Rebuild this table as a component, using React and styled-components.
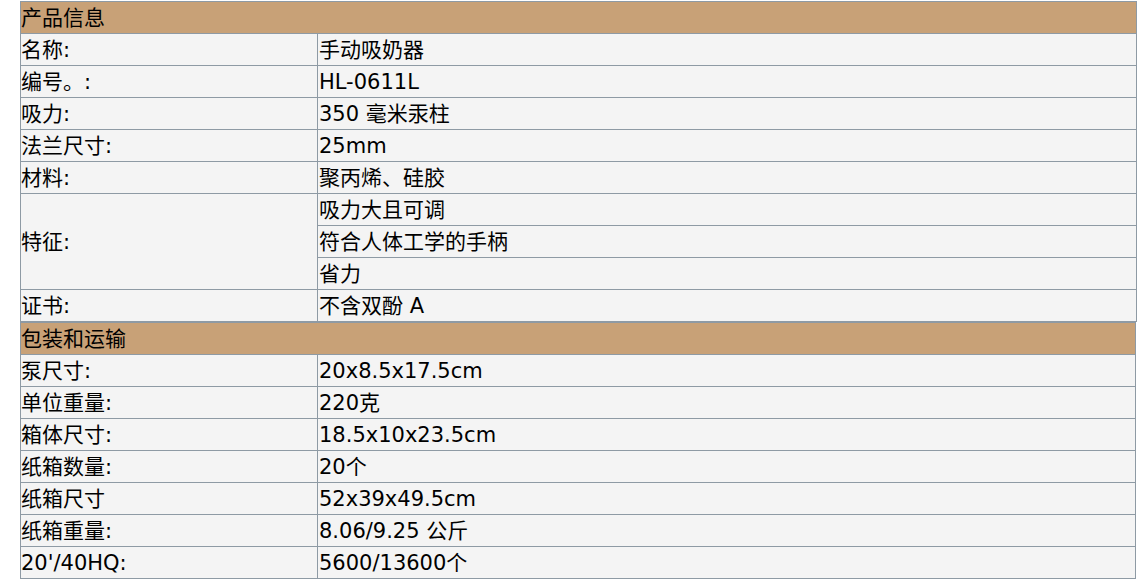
import React from 'react'
import styled, {createGlobalStyle} from 'styled-components'

const GlobalStyle = createGlobalStyle`
  html, body {
    margin: 0;
    padding: 0;
    background: #ffffff;
  }
  body {
    font-family: "DejaVu Sans", Verdana, "Noto Sans CJK SC", sans-serif;
    color: #000;
  }
`

const Page = styled.div`
  display: flex;
  flex-direction: column;
  padding: 1px 0 0 20px;
`

const Table = styled.table`
  width: ${props => props.width}px;
  border-spacing: 0;
  border-collapse: separate;
  border-top: 1px solid #8e9aa4;
  border-left: 1px solid #8e9aa4;
  table-layout: fixed;
  font-size: 21px;
`

const Cell = styled.td`
  height: 31px;
  padding: 1px 0 0 1px;
  box-sizing: border-box;
  line-height: 30px;
  vertical-align: middle;
  background: #f4f4f4;
  border-right: 1px solid #8e9aa4;
  border-bottom: 1px solid #8e9aa4;
  white-space: nowrap;
  font-family: "DejaVu Sans", Verdana, "Noto Sans CJK SC", sans-serif;
`

const Label = styled(Cell)`
  width: 295px;
  padding-left: 0;
`

const Heading = styled(Cell)`
  background: #c8a177;
  padding-left: 0;
`

const product = [
  ['名称:', ['手动吸奶器']],
  ['编号。:', ['HL-0611L']],
  ['吸力:', ['350 毫米汞柱']],
  ['法兰尺寸:', ['25mm']],
  ['材料:', ['聚丙烯、硅胶']],
  ['特征:', ['吸力大且可调', '符合人体工学的手柄', '省力']],
  ['证书:', ['不含双酚 A']],
]

const shipping = [
  ['泵尺寸:', ['20x8.5x17.5cm']],
  ['单位重量:', ['220克']],
  ['箱体尺寸:', ['18.5x10x23.5cm']],
  ['纸箱数量:', ['20个']],
  ['纸箱尺寸', ['52x39x49.5cm']],
  ['纸箱重量:', ['8.06/9.25 公斤']],
  ["20'/40HQ:", ['5600/13600个']],
]

const SpecTable = ({title, rows, width}) => (
  <Table width={width}>
    <colgroup>
      <col style={{width: 297}} />
      <col />
    </colgroup>
    <tbody>
      <tr>
        <Heading colSpan={2}>{title}</Heading>
      </tr>
      {rows.map(([label, values]) =>
        values.map((value, i) => (
          <tr key={label + i}>
            {i === 0 && <Label rowSpan={values.length}>{label}</Label>}
            <Cell>{value}</Cell>
          </tr>
        ))
      )}
    </tbody>
  </Table>
)

const App = () => (
  <>
    <GlobalStyle />
    <Page>
      <SpecTable title="产品信息" rows={product} width={1117} />
      <SpecTable title="包装和运输" rows={shipping} width={1116} />
    </Page>
  </>
)

export default App
